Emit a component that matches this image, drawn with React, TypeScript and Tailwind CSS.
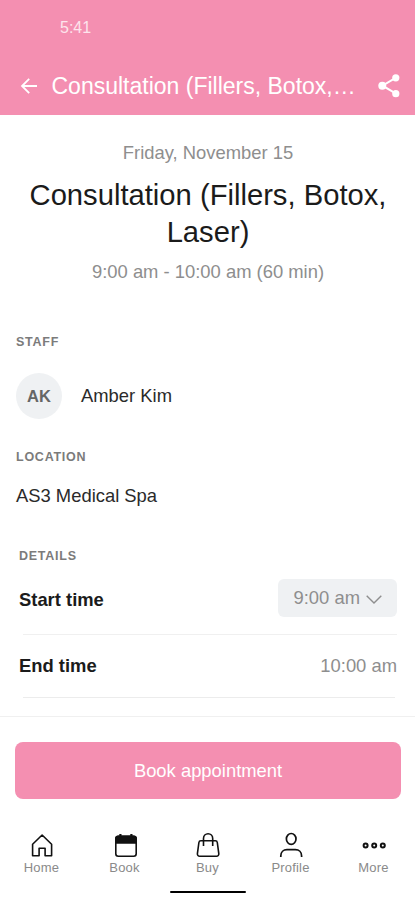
import {ReactNode} from "react";

const SectionLabel = ({children}: { children: ReactNode }) => (
    <h2 className="text-[12.5px] leading-4 font-bold tracking-[0.75px] text-[#7b7b7b]">
        {children}
    </h2>
);

const BackIcon = () => (
    <svg width="18" height="18" viewBox="0 0 18 18" fill="none" stroke="currentColor" strokeWidth="1.8">
        <path d="M17 9H2.5M9.2 1.8 2 9l7.2 7.2"/>
    </svg>
);

const ShareIcon = () => (
    <svg width="24" height="26" viewBox="0 0 24 26" fill="currentColor">
        <path d="M19 4.7 5.5 12.7l13.5 8" fill="none" stroke="currentColor" strokeWidth="2"/>
        <circle cx="18.8" cy="4.8" r="3.6"/>
        <circle cx="5.3" cy="12.7" r="4"/>
        <circle cx="18.8" cy="20.7" r="3.6"/>
    </svg>
);

const HomeIcon = () => (
    <svg width="28" height="28" viewBox="0 0 28 28" fill="none" stroke="currentColor" strokeWidth="1.6" strokeLinejoin="round">
        <path d="M4.6 13.3 14.1 4l9.5 9.3v11.5h-6.5v-7.6h-6v7.6H4.6Z"/>
    </svg>
);

const BookIcon = () => (
    <svg width="28" height="28" viewBox="0 0 28 28" fill="none" stroke="currentColor" strokeWidth="1.6">
        <rect x="4.8" y="5.3" width="20.4" height="20" rx="2.5"/>
        <path d="M4.8 12V7.8a2.5 2.5 0 0 1 2.5-2.5h15.4a2.5 2.5 0 0 1 2.5 2.5V12Z" fill="currentColor"/>
        <path d="M9.4 3V6.5M20.4 3V6.5" strokeWidth="2.2"/>
    </svg>
);

const BuyIcon = () => (
    <svg width="28" height="28" viewBox="0 0 28 28" fill="none" stroke="currentColor" strokeWidth="1.6" strokeLinejoin="round">
        <path d="M6.9 9.8h14.4a2 2 0 0 1 2 1.7l1.5 11.2a2.3 2.3 0 0 1-2.3 2.6H5.7a2.3 2.3 0 0 1-2.3-2.6L4.9 11.5a2 2 0 0 1 2-1.7Z"/>
        <path d="M9.5 15V7.4a4.6 4.6 0 0 1 9.2 0V15"/>
    </svg>
);

const ProfileIcon = () => (
    <svg width="28" height="28" viewBox="0 0 28 28" fill="none" stroke="currentColor" strokeWidth="1.7">
        <ellipse cx="14.2" cy="7.9" rx="4.8" ry="5.4"/>
        <path d="M3.8 26v-1c0-3.9 2.7-6.3 6.2-6.3h8.4c3.5 0 6.2 2.4 6.2 6.3v1"/>
    </svg>
);

const MoreIcon = () => (
    <svg width="28" height="28" viewBox="0 0 28 28" fill="none" stroke="currentColor" strokeWidth="2">
        <circle cx="5.6" cy="14.5" r="2"/>
        <circle cx="14.2" cy="14.5" r="2"/>
        <circle cx="22.8" cy="14.5" r="2"/>
    </svg>
);

const tabs = [
    {label: "Home", icon: <HomeIcon/>},
    {label: "Book", icon: <BookIcon/>},
    {label: "Buy", icon: <BuyIcon/>},
    {label: "Profile", icon: <ProfileIcon/>},
    {label: "More", icon: <MoreIcon/>},
];

export default function App() {
    return (
        <div className="flex h-[900px] w-[415px] flex-col overflow-hidden bg-white font-['Liberation_Sans',Arial,sans-serif] text-[18.4px] text-[#2a2a2a]">
            {/* Header */}
            <header className="h-[115px] shrink-0 bg-[#f48fb1] text-white">
                <div className="pt-[18px] pl-[60px] text-[16px] leading-5 text-[#fde4ec]">5:41</div>
                <div className="mt-[30px] flex h-9 items-center pl-5">
                    <BackIcon/>
                    <h1 className="ml-[13.5px] w-[309.5px] text-[23px] leading-9 whitespace-nowrap">
                        Consultation (Fillers, Botox,…
                    </h1>
                    <button aria-label="Share" className="ml-[16px]">
                        <ShareIcon/>
                    </button>
                </div>
            </header>

            <main className="flex h-[602px] shrink-0 flex-col border-b border-[#f0f0f0]">
                {/* Summary */}
                <section className="pt-[26px] pl-px text-center text-[#8e8e8e]">
                    <p className="leading-6">Friday, November 15</p>
                    <h2 className="mt-3 text-[29.2px] leading-[37px] text-[#1b1b1b]">
                        Consultation (Fillers, Botox,
                        <br/>
                        Laser)
                    </h2>
                    <p className="mt-[9px] leading-6">9:00 am - 10:00 am (60 min)</p>
                </section>

                {/* Staff */}
                <section className="mt-[50px] px-4">
                    <SectionLabel>STAFF</SectionLabel>
                    <div className="mt-[23px] flex items-center gap-[19px]">
                        <div className="flex size-[46px] items-center justify-center rounded-full bg-[#eff1f3] text-[16.5px] font-bold text-[#666]">
                            AK
                        </div>
                        <p>Amber Kim</p>
                    </div>
                </section>

                {/* Location */}
                <section className="mt-[30px] px-4">
                    <SectionLabel>LOCATION</SectionLabel>
                    <p className="mt-[19px] leading-6">AS3 Medical Spa</p>
                </section>

                {/* Details */}
                <section className="mt-[40px] pr-[18px] pl-[19px]">
                    <SectionLabel>DETAILS</SectionLabel>
                    <div className="mt-[15px] flex h-[38px] items-center justify-between">
                        <span className="pt-[3px] font-bold text-[#1b1b1b]">Start time</span>
                        <button className="flex h-[38px] w-[119px] items-center rounded-md bg-[#eff1f3] pl-[15.5px] text-[#8e8e8e]">
                            9:00 am
                            <svg className="mt-0.5 ml-1.5" width="16" height="9" viewBox="0 0 16 9" fill="none" stroke="currentColor" strokeWidth="1.4">
                                <path d="m.7.7 7.3 7.3L15.3.7"/>
                            </svg>
                        </button>
                    </div>
                    <div className="mt-[17px] ml-1 h-px bg-[#f0f0f0]"/>
                    <div className="flex h-[62px] items-center justify-between">
                        <span className="font-bold text-[#1b1b1b]">End time</span>
                        <span className="text-[#8e8e8e]">10:00 am</span>
                    </div>
                    <div className="mr-0.5 ml-1 h-px bg-[#ececec]"/>
                </section>
            </main>

            {/* Book button */}
            <div className="pt-[25px] pr-[14px] pl-[15px]">
                <button className="h-[57px] w-full rounded-lg bg-[#f48fb1] text-white">
                    Book appointment
                </button>
            </div>

            {/* Bottom tabs */}
            <nav className="mt-[32px] grid grid-cols-5">
                {tabs.map((tab) => (
                    <button key={tab.label} className="flex flex-col items-center text-[#111]">
                        {tab.icon}
                        <span className="mt-px text-[13px] leading-4 tracking-[0.2px] text-[#8a8a8a]">
                            {tab.label}
                        </span>
                    </button>
                ))}
            </nav>
            <div className="mx-auto mt-[15px] h-[2px] w-[76px] rounded-full bg-black"/>
        </div>
    );
}
